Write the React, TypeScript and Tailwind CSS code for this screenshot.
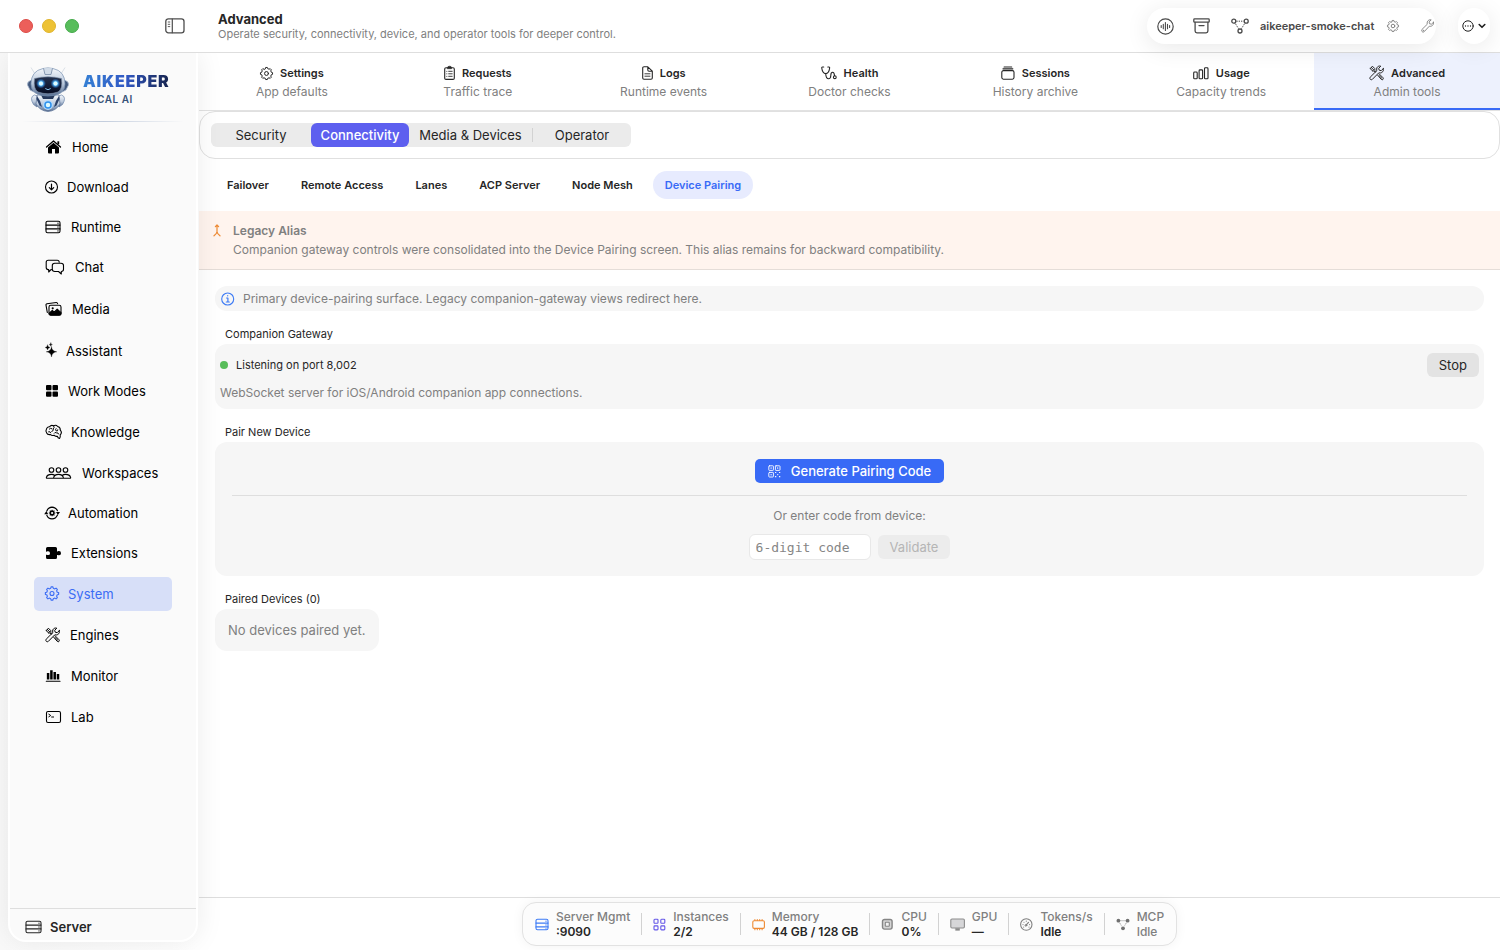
import type { ReactNode } from 'react';

type IconProps = { w: number; h: number; children: ReactNode; className?: string };

// Thin line icon, drawn 1:1 in pixels
function Icon({ w, h, children, className = '' }: IconProps) {
  return (
    <svg
      width={w}
      height={h}
      viewBox={`0 0 ${w} ${h}`}
      fill="none"
      stroke="currentColor"
      strokeWidth="1.1"
      strokeLinecap="round"
      strokeLinejoin="round"
      className={`shrink-0 overflow-visible ${className}`}
      aria-hidden="true"
    >
      {children}
    </svg>
  );
}

function gearPath(cx: number, cy: number, outer: number, inner: number, teeth = 8) {
  const points: string[] = [];
  const step = (Math.PI * 2) / teeth;
  const at = (r: number, a: number) => `${(cx + r * Math.sin(a)).toFixed(2)} ${(cy - r * Math.cos(a)).toFixed(2)}`;
  for (let i = 0; i < teeth; i++) {
    const a = i * step;
    points.push(at(inner, a - step * 0.3), at(outer, a - step * 0.18), at(outer, a + step * 0.18), at(inner, a + step * 0.3));
  }
  return `M${points.join('L')}Z`;
}

function GearIcon({ size = 14 }: { size?: number }) {
  const c = size / 2;
  return (
    <Icon w={size} h={size}>
      <path d={gearPath(c, c, c - 0.4, c - 1.5)} strokeWidth="1" />
      <circle cx={c} cy={c} r={size * 0.15} strokeWidth="1" />
    </Icon>
  );
}

function ToolsIcon() {
  return (
    <Icon w={15} h={16}>
      <g strokeWidth="1">
        <path d="M14.3 3.6 12.2 5.7 10.2 5.2 9.7 3.3 11.8 1.2C10.4.7 8.7 1.2 8 2.6 7.5 3.6 7.5 4.5 7.9 5.5L1.2 12.2C.2 13.2 1.4 15.7 3.3 14.4L9.9 7.7C10.9 8.1 11.9 8.1 12.9 7.4 14.3 6.6 14.8 5 14.3 3.6Z" />
        <path d="M1.2 3.6 3.4 1.2 5.8 3.6 5.8 5.4 7 6.6M3.6 5.9 1.2 3.6M3.6 5.9 5.2 6 6.3 7.2M2.3 2.5 4.7 4.8" />
        <path d="M8.7 10.2 12.3 14.4C13.6 15.5 15 13.9 14 12.7L10.2 8.9M10.1 10.6 12.9 13.3" />
      </g>
    </Icon>
  );
}

function ServerIcon({ w = 16, h = 14 }: { w?: number; h?: number }) {
  return (
    <Icon w={w} h={h}>
      <rect x="1" y="1.2" width={w - 2} height={h - 2.4} rx="1.6" />
      <path d={`M1 5.1H${w - 1}M1 8.9H${w - 1}`} />
      <path d={`M${w - 3} 3.1v.1M${w - 3} 7v.1M${w - 3} 10.8v.1`} strokeWidth="1.3" />
    </Icon>
  );
}

function NodesIcon({ filled = false }: { filled?: boolean }) {
  return filled ? (
    <Icon w={14} h={13}>
      <g fill="currentColor" stroke="none">
        <circle cx="2.4" cy="2.7" r="1.9" />
        <circle cx="11.6" cy="2.7" r="1.9" />
        <circle cx="7" cy="10.3" r="1.9" />
      </g>
      <path d="M4.5 2.7h5M3.7 4.9l2.2 3.6M10.3 4.9 8.1 8.5" strokeWidth=".8" strokeDasharray="1 1" strokeLinecap="butt" />
    </Icon>
  ) : (
    <Icon w={18} h={16}>
      <circle cx="2.8" cy="3.2" r="2" strokeWidth="1.3" />
      <circle cx="15.2" cy="3.2" r="2" strokeWidth="1.3" />
      <circle cx="9" cy="13" r="2" strokeWidth="1.3" />
      <path
        d="M5.4 3.2h7.2M4.5 5.8l3 4.8M13.5 5.8l-3 4.8"
        strokeWidth="1"
        strokeDasharray="1.3 1"
        strokeLinecap="butt"
      />
    </Icon>
  );
}

const navItems = [
  {
    label: 'Home',
    icon: (
      <Icon w={17} h={16}>
        <path d="M1.5 8 8.5 1.9 15.5 8" strokeWidth="1.3" />
        <path d="M13.3 2.3v3" strokeWidth="1.8" strokeLinecap="butt" />
        <path d="M3 8.4 8.5 3.7 14 8.4V13.6Q14 14.6 13 14.6H4Q3 14.6 3 13.6ZM7 14.6V10H10V14.6Z" fill="currentColor" fillRule="evenodd" stroke="none" />
      </Icon>
    ),
  },
  {
    label: 'Download',
    icon: (
      <Icon w={12} h={16}>
        <circle cx="6.5" cy="8" r="6" />
        <path d="M6.5 5v5.8M4.3 8.7l2.2 2.2 2.2-2.2" strokeWidth="1.2" />
      </Icon>
    ),
  },
  { label: 'Runtime', icon: <ServerIcon /> },
  {
    label: 'Chat',
    icon: (
      <Icon w={20} h={16}>
        <path d="M6.5 10.6H6L3.7 13V10.6H3.2Q1.2 10.6 1.2 8.6V3.2Q1.2 1.2 3.2 1.2H12.2Q14.2 1.2 14.2 3.2" />
        <path d="M9.8 4.3H16Q18.5 4.3 18.5 6.5V10.3Q18.5 12.5 16.3 12.5V15L13.5 12.5H9.8Q7.3 12.5 7.3 10.3V6.5Q7.3 4.3 9.8 4.3Z" />
      </Icon>
    ),
  },
  {
    label: 'Media',
    icon: (
      <Icon w={17} h={20}>
        <path d="M2.3 13.5 1 6.2Q.8 5 2 4.8L11.3 3.5Q12.3 3.4 12.6 4.6" />
        <rect x="4" y="6.3" width="12" height="9.8" rx="1.8" />
        <path d="M4 14.5 7.3 11.5 9.2 13.2 12.2 10.2 16 13.7V14.7Q16 16 14.5 16H5.5Q4 16 4 14.5Z" fill="currentColor" />
        <circle cx="7.7" cy="9.3" r="1.1" fill="currentColor" stroke="none" />
      </Icon>
    ),
  },
  {
    label: 'Assistant',
    icon: (
      <Icon w={11} h={16}>
        <g fill="currentColor" stroke="currentColor" strokeWidth=".3">
          <path d="M6.5 3.8Q7 8.3 11.8 8.8 7 9.3 6.5 14 6 9.3 1.2 8.8 6 8.3 6.5 3.8Z" />
          <path d="M2.6 2Q2.9 4.2 5 4.5 2.9 4.8 2.6 7 2.3 4.8.2 4.5 2.3 4.2 2.6 2Z" />
          <path d="M5.8-.1Q6 1.4 7.4 1.6 6 1.8 5.8 3.3 5.6 1.8 4.2 1.6 5.6 1.4 5.8-.1Z" />
        </g>
      </Icon>
    ),
  },
  {
    label: 'Work Modes',
    icon: (
      <Icon w={13} h={16}>
        <g fill="currentColor" stroke="none">
          <rect x="1" y="2" width="5.5" height="5.3" rx="1" />
          <rect x="7.5" y="2" width="5.5" height="5.3" rx="1" />
          <rect x="1" y="8.4" width="5.5" height="5.3" rx="1" />
          <rect x="7.5" y="8.4" width="5.5" height="5.3" rx="1" />
        </g>
      </Icon>
    ),
  },
  {
    label: 'Knowledge',
    icon: (
      <Icon w={16} h={18}>
        <path d="M4.5 3.8Q6.2 1.5 8.5 2.8 11 1.5 12.7 3.5 15.5 4.3 15.3 7.2 17.5 9.8 15.2 11.8 15.6 14.5 14.5 15.5 12.8 15.3 12.3 13.2 10.3 13.8 9 12.2 6.8 13 5.5 11.5 2.5 12 1.7 10 .2 8 1.5 6 2 3.6 4.5 3.8Z" />
        <path d="M4.3 6Q5.5 4.6 7 5.7M8.7 3Q9.8 4.7 8.3 5.9 8.8 8 6.8 8.5M3.6 8.7Q5.2 8 5.7 9.8M11 5.6Q9.9 6.8 11.3 8 13 8.4 12.8 6.8M9.2 10.2Q9.9 8.7 11.3 9.8 13.5 9.5 13.7 11" strokeWidth="1" />
      </Icon>
    ),
  },
  {
    label: 'Workspaces',
    icon: (
      <Icon w={27} h={16}>
        <circle cx="6.5" cy="5" r="2.3" />
        <circle cx="13.5" cy="5" r="2.3" />
        <circle cx="20.5" cy="5" r="2.3" />
        <path d="M9.3 13.3H2Q1.2 13.3 1.4 12.3 2.3 9.4 6.5 9.4 8.5 9.4 9.7 10.5M17.7 13.3H9.3Q8.5 13.3 8.7 12.3 9.6 9.4 13.5 9.4 17.4 9.4 18.3 12.3 18.5 13.3 17.7 13.3M17.3 10.5Q18.5 9.4 20.5 9.4 24.7 9.4 25.6 12.3 25.8 13.3 25 13.3H17.7" />
      </Icon>
    ),
  },
  {
    label: 'Automation',
    icon: (
      <Icon w={13} h={16}>
        <path d="M1.8 6Q3.2 2.2 7 2.1 10.8 2.2 12.5 5.8M12.5 10Q10.8 13.9 7 13.9 3.2 13.8 1.8 10.3" />
        <path d="M-.8 9.2 1.4 6 3.2 9.2ZM15 7 12.9 10 11 7Z" fill="currentColor" stroke="none" />
        <path d={gearPath(7.1, 8, 3.3, 2.5)} fill="currentColor" stroke="none" />
        <circle cx="7.1" cy="8" r="1.1" fill="#fafafa" stroke="none" />
      </Icon>
    ),
  },
  {
    label: 'Extensions',
    icon: (
      <Icon w={16} h={16}>
        <path
          d="M2.5 2H10.5Q12 2 12 3.5V6.2Q12.7 6.6 13.4 6.1 16 5.7 16 8.2 16 10.7 13.4 10.2 12.7 9.7 12 10.1V12.5Q12 14 10.5 14H2.5Q1 14 1 12.5V9.8Q1.7 9.5 2.4 10 5 10.6 5 8.2 5 5.8 2.4 6.3 1.7 6.9 1 6.5V3.5Q1 2 2.5 2Z"
          fill="currentColor"
          stroke="none"
        />
      </Icon>
    ),
  },
  {
    label: 'System',
    active: true,
    icon: (
      <Icon w={13} h={18}>
        <path d={gearPath(7, 8.5, 6.7, 5.4)} />
        <circle cx="7" cy="8.5" r="2" />
      </Icon>
    ),
  },
  { label: 'Engines', icon: <ToolsIcon /> },
  {
    label: 'Monitor',
    icon: (
      <Icon w={16} h={18}>
        <path d="M3.1 12.6V6M6.4 12.6V3.2M9.7 12.6V5M13 12.6V7" strokeWidth="2.5" strokeLinecap="butt" />
        <path d="M1.3 14.3H15" strokeWidth="1.1" />
      </Icon>
    ),
  },
  {
    label: 'Lab',
    icon: (
      <Icon w={16} h={16}>
        <rect x="1.5" y="2.5" width="14" height="11" rx="1.5" />
        <path d="M3.8 5.2 5.7 6.5 3.8 7.8M6.6 8H8.6" strokeWidth="1" />
      </Icon>
    ),
  },
];

const sections = [
  { title: 'Settings', subtitle: 'App defaults', icon: <GearIcon size={13} /> },
  {
    title: 'Requests',
    subtitle: 'Traffic trace',
    icon: (
      <Icon w={11} h={14}>
        <path d="M3.5 1.7H2Q.7 1.7.7 3V12.2Q.7 13.4 2 13.4H9Q10.3 13.4 10.3 12.2V3Q10.3 1.7 9 1.7H7.5" />
        <path d="M3.5 1.5Q3.5.2 5.5.2 7.5.2 7.5 1.5V2.7H3.5Z" fill="currentColor" strokeWidth=".6" />
        <path d="M2.8 5.3v.1M2.8 7.8v.1M2.8 10.3v.1M4.7 5.3H8.2M4.7 7.8H8.2M4.7 10.3H8.2" strokeWidth=".9" />
      </Icon>
    ),
  },
  {
    title: 'Logs',
    subtitle: 'Runtime events',
    icon: (
      <Icon w={11} h={14}>
        <path d="M2 .8H5.8L10.3 5.2V12Q10.3 13.2 9 13.2H2Q.7 13.2.7 12V2Q.7.8 2 .8ZM5.8.8V4Q5.8 5.2 7 5.2H10.3" />
        <path d="M2.9 7.8H8M2.9 10.2H8" strokeWidth=".9" />
      </Icon>
    ),
  },
  {
    title: 'Health',
    subtitle: 'Doctor checks',
    icon: (
      <Icon w={16} h={14}>
        <path d="M2.7 1H1.5Q.6 1 .8 2.2 1.5 7.4 4.7 7.6 8 7.4 8.6 2.2 8.8 1 7.9 1H6.8M4.7 7.6Q5 12.8 7.6 12.8 9.7 12.8 9.8 9.5 9.8 6.3 11.6 6.3 13.3 6.3 13.5 9.7" />
        <circle cx="13.8" cy="11.2" r="1.4" />
      </Icon>
    ),
  },
  {
    title: 'Sessions',
    subtitle: 'History archive',
    icon: (
      <Icon w={14} h={14}>
        <rect x=".8" y="4.6" width="12.2" height="8.6" rx="1.6" />
        <path d="M2 2.8H11.8M3.1 1H10.7" strokeWidth="1.2" />
      </Icon>
    ),
  },
  {
    title: 'Usage',
    subtitle: 'Capacity trends',
    icon: (
      <Icon w={16} h={14}>
        <rect x=".7" y="6" width="3.5" height="6.8" rx=".9" />
        <rect x="6.1" y="3.9" width="3.5" height="8.9" rx=".9" />
        <rect x="11.5" y="1.8" width="3.5" height="11" rx=".9" />
      </Icon>
    ),
  },
  { title: 'Advanced', subtitle: 'Admin tools', active: true, icon: <ToolsIcon /> },
];

const pages = ['Failover', 'Remote Access', 'Lanes', 'ACP Server', 'Node Mesh', 'Device Pairing'];

const stats = [
  { label: 'Server Mgmt', value: ':9090', color: 'text-[#3d7bf5]', icon: <ServerIcon w={14} h={13} /> },
  {
    label: 'Instances',
    value: '2/2',
    color: 'text-[#6355e8]',
    icon: (
      <Icon w={13} h={13}>
        <rect x="1" y="1.3" width="4" height="4" rx=".8" />
        <rect x="7.8" y="1.3" width="4" height="4" rx=".8" />
        <rect x="1" y="7.9" width="4" height="4" rx=".8" />
        <rect x="7.8" y="7.9" width="4" height="4" rx=".8" />
      </Icon>
    ),
  },
  {
    label: 'Memory',
    value: '44 GB / 128 GB',
    color: 'text-[#ee8a33]',
    icon: (
      <Icon w={13} h={13}>
        <rect x=".8" y="2.8" width="11.6" height="7.6" rx="1.3" />
        <path d="M2.9 1.5v1M5.3 1.5v1M7.7 1.5v1M10.1 1.5v1M2.9 10.8v1M5.3 10.8v1M7.7 10.8v1M10.1 10.8v1" />
      </Icon>
    ),
  },
  {
    label: 'CPU',
    value: '0%',
    color: 'text-[#858585]',
    icon: (
      <Icon w={13} h={13}>
        <rect x="1.5" y="1.5" width="9.6" height="9.6" rx="2" fill="#d4d4d4" strokeWidth="1.4" />
        <rect x="4.3" y="4.3" width="4" height="4" rx=".6" fill="#f3f3f3" />
      </Icon>
    ),
  },
  {
    label: 'GPU',
    value: '—',
    color: 'text-[#8c8c8c]',
    icon: (
      <Icon w={15} h={13}>
        <rect x=".8" y="1" width="13.6" height="9" rx="1.2" fill="#d6d6d8" />
        <path d="M5.8 10.5H9.5V12.3H5.8Z" fill="currentColor" strokeWidth=".6" />
      </Icon>
    ),
  },
  {
    label: 'Tokens/s',
    value: 'Idle',
    color: 'text-[#808080]',
    icon: (
      <Icon w={13} h={13}>
        <circle cx="6.3" cy="6.5" r="5.7" />
        <path d="M5.9 7.3 8.5 4.4" strokeWidth="1.2" />
        <circle cx="5.9" cy="7.4" r=".9" strokeWidth=".9" />
        <path d="M3 6.5v.1M4 4.2v.1M6.3 3.1v.1M9.6 6.5v.1M3.7 9v.1M9 9v.1" />
      </Icon>
    ),
  },
  { label: 'MCP', value: 'Idle', color: 'text-[#707070]', muted: true, icon: <NodesIcon filled /> },
];

function RobotLogo() {
  return (
    <svg width="44" height="46" viewBox="0 0 44 46" className="shrink-0" aria-hidden="true">
      <defs>
        <linearGradient id="shell" x1="0" y1="0" x2="0" y2="1">
          <stop offset="0" stopColor="#f4f7fb" />
          <stop offset=".55" stopColor="#bccadd" />
          <stop offset="1" stopColor="#566d91" />
        </linearGradient>
        <linearGradient id="visor" x1="0" y1="0" x2="0" y2="1">
          <stop offset="0" stopColor="#24314d" />
          <stop offset="1" stopColor="#050b22" />
        </linearGradient>
        <radialGradient id="glow">
          <stop offset="0" stopColor="#f1fdff" />
          <stop offset=".4" stopColor="#62c6ff" />
          <stop offset="1" stopColor="#1769dc" stopOpacity="0" />
        </radialGradient>
      </defs>
      <path d="M9 8 5 1.5M35 8 39 1.5" stroke="#b9c5d3" strokeWidth=".5" />
      <path d="M8.5 29Q3 31 7.5 38.500L11 41 14 31ZM35.5 29Q41 31 36.5 38.500L33 41 30 31Z" fill="url(#shell)" stroke="#6982a7" strokeWidth=".7" />
      <path d="M11 29H33L34 38Q30 45 22 45.5 14 45 10 38Z" fill="url(#shell)" stroke="#5a7195" strokeWidth=".7" />
      <path d="M11 30Q15 35 16 41L13.5 39.5 10.5 33ZM33 30Q29 35 28 41L30.5 39.5 33.5 33Z" fill="#2c426a" />
      <path d="M15 29H29L27 33H17Z" fill="#25385b" />
      <path d="M5.5 14Q.8 15.5 1.5 19L4 24 8 26ZM38.5 14Q43.2 15.5 42.5 19L40 24 36 26Z" fill="#40577c" stroke="#a9b9ce" strokeWidth=".8" />
      <path d="M5 18Q5 5 17 2.5 22 1.2 27 2.5 39 5 39 18 39 30 22 30 5 30 5 18Z" fill="url(#shell)" stroke="#7990b0" strokeWidth=".7" />
      <path d="M17.5 2.3 19 8.5H25L26.5 2.3" fill="#d2dce8" stroke="#7f92ab" strokeWidth=".9" />
      <path d="M8.5 12.5Q22 9 35.5 12.5 37 23 32 26 22 29.5 12 26 7 23 8.5 12.5Z" fill="url(#visor)" stroke="#7f92ab" strokeWidth=".6" />
      <circle cx="15" cy="17.5" r="5" fill="url(#glow)" />
      <circle cx="29.5" cy="17.5" r="5" fill="url(#glow)" />
      <circle cx="15" cy="17.5" r="2" fill="#e1faff" />
      <circle cx="29.5" cy="17.5" r="2" fill="#e1faff" />
      <path d="M19.3 22.5Q22 25 24.7 22.5" fill="none" stroke="#91d3ff" strokeWidth=".9" />
      <circle cx="22" cy="39" r="5" fill="#b5d9fa" />
      <circle cx="22" cy="39" r="3" fill="#dcf9ff" stroke="#2f91ec" strokeWidth="1.5" />
    </svg>
  );
}

function TopBar() {
  return (
    <header className="relative z-20 flex h-[53px] shrink-0 items-center border-b border-[#dedede] bg-white">
      <div className="flex w-[218px] shrink-0 items-center pl-[19px]">
        <div className="flex gap-[9px]">
          <button aria-label="Close" className="size-[14px] rounded-full border border-[#dc4c48] bg-[#ec5f5a]" />
          <button aria-label="Minimize" className="size-[14px] rounded-full border border-[#e0b52d] bg-[#edc235]" />
          <button aria-label="Zoom" className="size-[14px] rounded-full border border-[#45aa4b] bg-[#58bd5b]" />
        </div>
        <button aria-label="Toggle sidebar" className="ml-[86px] text-[#4d4d4d]">
          <Icon w={20} h={16}>
            <rect x=".8" y=".8" width="18.2" height="14" rx="2.6" strokeWidth="1.3" />
            <path d="M7.3 1V14.7" strokeWidth="1.2" />
            <path d="M3.2 4H4.8M3.2 6.3H4.8M3.2 8.6H4.8" strokeWidth=".9" />
          </Icon>
        </button>
      </div>
      <div className="min-w-0 flex-1">
        <h1 className="text-[13px] leading-4 font-bold">Advanced</h1>
        <p className="text-[11px] leading-[14px] text-[#808080]">
          Operate security, connectivity, device, and operator tools for deeper control.
        </p>
      </div>
      <div className="mr-[10px] flex items-center gap-[22px]">
        <div className="flex h-9 w-[289px] items-center overflow-hidden rounded-full bg-white pl-[10px] text-[#4a4a4a] shadow-[0_4px_24px_rgba(0,0,0,0.09)]">
          <button aria-label="Voice">
            <Icon w={17} h={17}>
              <circle cx="8.5" cy="8.5" r="7.7" strokeWidth="1.2" />
              <path d="M4.2 7.6v1.8M6.3 6.3v4.4M8.4 4.5v8M10.5 6.3v4.4M12.6 7.6v1.8" />
            </Icon>
          </button>
          <button aria-label="Archive" className="ml-[19px]">
            <Icon w={17} h={16}>
              <rect x=".8" y=".9" width="15.4" height="3.3" rx=".8" strokeWidth="1.3" />
              <path d="M2.1 4.3V13Q2.1 14.8 3.9 14.8H13.1Q14.9 14.8 14.9 13V4.3M6 7.6H11" strokeWidth="1.3" />
            </Icon>
          </button>
          <button className="ml-[21px] flex items-center gap-[11px] text-[11px] font-semibold whitespace-nowrap">
            <NodesIcon />
            aikeeper-smoke-chat
          </button>
          <button aria-label="Chat settings" className="ml-[13px] text-[#808080]">
            <GearIcon size={12} />
          </button>
          <button aria-label="Tools" className="ml-[22px] text-[#808080]">
            <Icon w={13} h={14}>
              <path d="M12.5 3.3 10.4 5.2 8.5 4.7 8.1 2.9 10.2.9C8.6.4 6.8 1.3 6.3 2.9 6 3.9 6.1 4.5 6.3 5.2L1 10.4C-.2 11.7 1.6 14 3.2 12.7L8.3 7.2C10.5 7.9 13.2 5.9 12.5 3.3Z" strokeWidth=".9" />
              <circle cx="2.3" cy="11.5" r=".4" strokeWidth=".6" />
            </Icon>
          </button>
        </div>
        <button
          aria-label="More"
          className="flex h-9 w-8 items-center justify-center gap-1 rounded-full bg-white text-[#1f1f1f] shadow-[0_4px_24px_rgba(0,0,0,0.09)]"
        >
          <Icon w={12} h={12}>
            <circle cx="6" cy="6" r="5.2" strokeWidth="1" />
            <path d="M3.5 6v.1M6 6v.1M8.5 6v.1" strokeWidth="1.3" />
          </Icon>
          <Icon w={8} h={6}>
            <path d="M1.2 1.5 4 4.3 6.8 1.5" strokeWidth="1.6" />
          </Icon>
        </button>
      </div>
    </header>
  );
}

function Sidebar() {
  return (
    <aside className="relative z-10 flex w-[199px] shrink-0 bg-gradient-to-r from-[#f9f9f9] to-white pr-px pb-2 pl-2">
      <div className="flex flex-1 flex-col rounded-b-[18px] border-x-2 border-b-2 border-white bg-[#fafafa] shadow-[0_0_28px_rgba(0,0,0,0.08)]">
        <div className="mx-4 flex h-[68px] items-center gap-[13px] pt-1">
          <RobotLogo />
          <div className="whitespace-nowrap">
            <div className="bg-gradient-to-r from-[#3580d4] via-[#3158c4] to-[#16234d] bg-clip-text text-base leading-5 font-black tracking-wider text-transparent">
              AIKEEPER
            </div>
            <div className="text-[10px] leading-4 font-semibold tracking-wider text-[#365277]">LOCAL AI</div>
          </div>
        </div>
        <div className="mx-3 h-px shrink-0 bg-gradient-to-r from-transparent via-[#c3cddd] to-transparent" />
        <nav className="mx-6 flex flex-col gap-2 pt-[9px]">
          {navItems.map((item) => (
            <a
              key={item.label}
              href="#"
              aria-current={item.active ? 'page' : undefined}
              className={`flex items-center gap-[10px] rounded-[5px] py-2 pl-[11px] text-[13px] leading-4 ${
                item.active ? 'bg-[#d7dff8] text-[#3b6cf4]' : 'text-black'
              }`}
            >
              {item.icon}
              {item.label}
            </a>
          ))}
        </nav>
        <button className="mt-auto flex h-8 items-center gap-2 border-t border-[#dedede] pt-1 pl-[15px] text-[13px] leading-5 font-semibold">
          <ServerIcon w={17} h={14} />
          Server
        </button>
      </div>
    </aside>
  );
}

function GroupLabel({ children }: { children: ReactNode }) {
  return <h2 className="px-[10px] text-[11px] leading-5">{children}</h2>;
}

function DevicePairing() {
  return (
    <div className="flex flex-col px-4 pt-4">
      <div className="flex h-[25px] items-center gap-2 rounded-xl bg-[#f6f6f6] pl-[6px] text-xs text-[#808080]">
        <Icon w={14} h={14} className="text-[#3d7bf5]">
          <circle cx="6.7" cy="7" r="6" />
          <path d="M5.6 6H6.9V10M5.3 10H8.3M6.7 3.7v.1" strokeWidth="1.2" />
        </Icon>
        Primary device-pairing surface. Legacy companion-gateway views redirect here.
      </div>

      <section className="pt-[13px]">
        <GroupLabel>Companion Gateway</GroupLabel>
        <div className="rounded-xl bg-[#f6f6f6] px-[5px] pt-[9px] pb-2">
          <div className="flex items-center gap-2 text-[11px]">
            <span className="size-2 rounded-full bg-[#57bd59]" />
            Listening on port 8,002
            <button className="ml-auto h-6 rounded-[6px] bg-[#e3e3e3] px-3 text-[13px] leading-6">Stop</button>
          </div>
          <p className="pt-2 text-xs text-[#808080]">WebSocket server for iOS/Android companion app connections.</p>
        </div>
      </section>

      <section className="pt-[13px]">
        <GroupLabel>Pair New Device</GroupLabel>
        <div className="flex flex-col items-center rounded-xl bg-[#f6f6f6] px-[17px] pt-[17px] pb-4">
          <button className="flex h-6 items-center gap-[10px] rounded-[5px] bg-[#386af6] px-[13px] text-[13px] leading-6 font-medium text-white">
            <Icon w={13} h={13}>
              <g strokeWidth=".9">
                <rect x=".8" y=".8" width="4.6" height="4.6" rx=".6" />
                <rect x="7.4" y=".8" width="4.6" height="4.6" rx=".6" />
                <rect x=".8" y="7.4" width="4.6" height="4.6" rx=".6" />
                <path
                  d="M3.1 2.9v.3M9.7 2.9v.3M3.1 9.5v.3M7.5 7.5h.3M11.5 7.5h.3M9.7 9.6h.1M7.5 11.7h.3M11.5 11.7h.3"
                  strokeWidth="1.2"
                />
              </g>
            </Icon>
            Generate Pairing Code
          </button>
          <hr className="mt-3 w-full border-[#dedede]" />
          <label htmlFor="pairing-code" className="pt-3 text-xs text-[#808080]">
            Or enter code from device:
          </label>
          <div className="flex items-center gap-[7px] pt-[10px]">
            <input
              id="pairing-code"
              placeholder="6-digit code"
              className="h-[26px] w-[122px] rounded-[6px] border border-[#e8e8e8] bg-white px-[6px] font-['DejaVu_Sans_Mono',monospace] text-[13px] placeholder:text-[#858585]"
            />
            <button disabled className="h-6 rounded-[6px] bg-[#ececec] px-3 text-[13px] leading-6 text-[#b5b5b5]">
              Validate
            </button>
          </div>
        </div>
      </section>

      <section className="pt-[13px]">
        <GroupLabel>Paired Devices (0)</GroupLabel>
        <div className="w-fit rounded-xl bg-[#f6f6f6] px-[13px] py-[11px] text-[13px] leading-5 text-[#808080]">
          No devices paired yet.
        </div>
      </section>
    </div>
  );
}

function StatusBar() {
  return (
    <footer className="mt-auto flex justify-center border-t border-[#dedede] pt-1 pb-1">
      <div className="flex items-center rounded-[14px] border border-[#e2e2e2] bg-[#fcfcfc] px-3 py-[6px] shadow-[0_0_12px_rgba(0,0,0,0.05)]">
        {stats.map((stat, i) => (
          <div key={stat.label} className="flex items-center">
            {i > 0 && <div className="mx-[11px] h-[22px] w-px bg-[#d2d2d2]" />}
            <span className={stat.color}>{stat.icon}</span>
            <div className={`ml-[7px] text-xs leading-[15px] ${stat.muted ? 'text-[#808080]' : ''}`}>
              <div className="font-medium text-[#808080]">{stat.label}</div>
              <div className={stat.muted ? 'font-medium' : 'font-semibold'}>{stat.value}</div>
            </div>
          </div>
        ))}
      </div>
    </footer>
  );
}

export default function App() {
  return (
    <div className="flex min-h-screen flex-col bg-white font-['Inter',sans-serif] text-[#262626]">
      <TopBar />
      <div className="flex flex-1">
        <Sidebar />
        <main className="flex min-w-0 flex-1 flex-col">
          <nav className="flex border-b border-[#e2e2e2]">
            {sections.map((section) => (
              <a
                key={section.title}
                href="#"
                className={`flex h-[57px] flex-1 flex-col items-center border-b-2 pt-[10px] ${
                  section.active ? 'border-[#386af6] bg-[#edf1fd]' : 'border-transparent'
                }`}
              >
                <span className="flex h-5 items-center gap-[7px] text-[11px] font-semibold">
                  {section.icon}
                  {section.title}
                </span>
                <span className="text-xs leading-[18px] text-[#808080]">{section.subtitle}</span>
              </a>
            ))}
          </nav>

          <div className="rounded-[16px] border border-[#e0e0e0] px-[11px] py-[11px]">
            <div className="flex h-6 w-[420px] items-center rounded-[6px] bg-[#ebebeb] text-[13px] leading-6">
              <button className="w-[100px]">Security</button>
              <button className="h-6 w-[98px] rounded-[6px] bg-[#5d5fef] font-medium text-white">Connectivity</button>
              <button className="w-[123px]">Media &amp; Devices</button>
              <div className="h-[14px] w-px bg-[#d2d2d2]" />
              <button className="flex-1">Operator</button>
            </div>
          </div>

          <nav className="flex gap-2 px-4 py-3">
            {pages.map((page) => (
              <a
                key={page}
                href="#"
                className={`flex h-7 items-center rounded-full px-3 text-[11px] font-semibold ${
                  page === 'Device Pairing' ? 'bg-[#e7ebfe] text-[#386af6]' : ''
                }`}
              >
                {page}
              </a>
            ))}
          </nav>

          <div className="flex gap-3 border-b border-[#e5ddd8] bg-[#fff4ee] px-[14px] py-[10px] text-xs text-[#808080]">
            <Icon w={8} h={14} className="mt-[3px] text-[#ee8a33]">
              <path d="M4 1V7.8Q3.8 9.5 1 11.8M4 7.8Q4.2 9.5 7 11.8M2.4 2.7 4 1 5.6 2.7" strokeWidth="1.2" />
            </Icon>
            <div>
              <h2 className="leading-5 font-semibold">Legacy Alias</h2>
              <p className="leading-[18px]">
                Companion gateway controls were consolidated into the Device Pairing screen. This alias remains for
                backward compatibility.
              </p>
            </div>
          </div>

          <DevicePairing />
          <StatusBar />
        </main>
      </div>
    </div>
  );
}
